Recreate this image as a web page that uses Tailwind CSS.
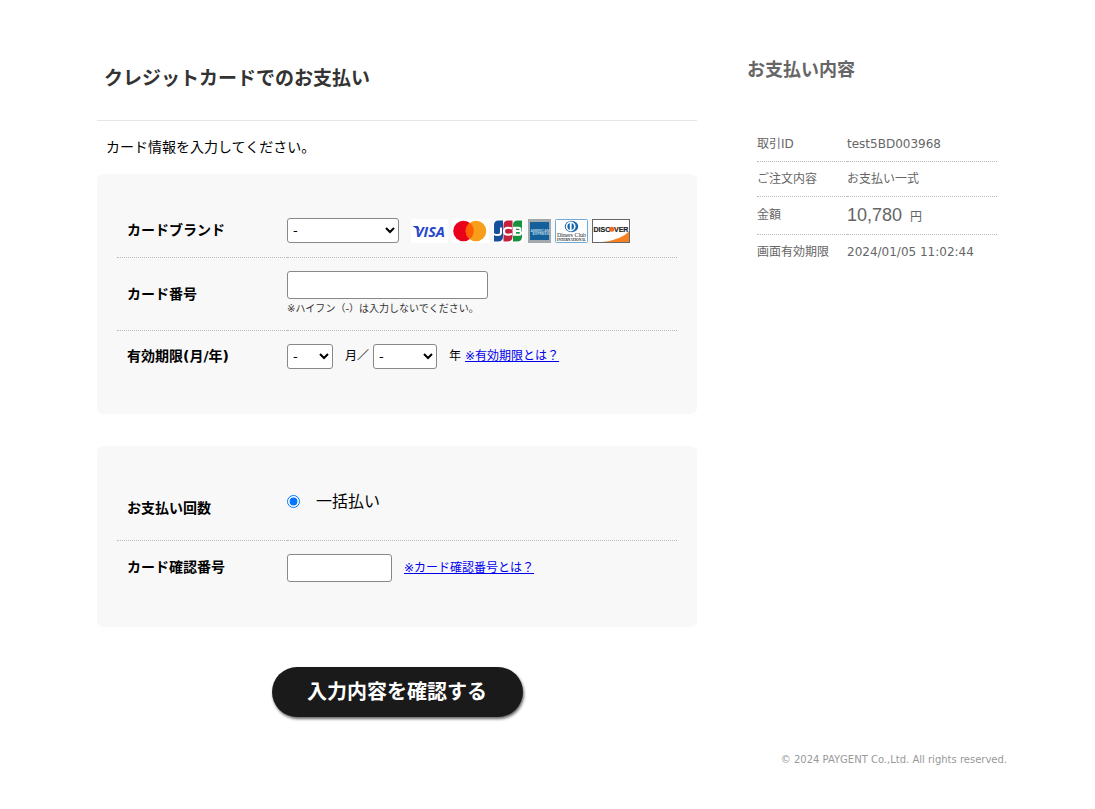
<!DOCTYPE html>
<html lang="ja">
<head>
<meta charset="utf-8">
<meta name="viewport" content="width=device-width, initial-scale=1">
<title>クレジットカードでのお支払い</title>
<script src="https://cdn.jsdelivr.net/npm/@tailwindcss/browser@4"></script>
</head>
<body class="bg-white text-black text-sm font-['DejaVu_Sans','Noto_Sans_CJK_JP',sans-serif]">
<div class="max-w-[921px] mx-auto pt-14">
  <div class="flex items-start justify-between pl-[10px] pr-[11px]">
    <main class="w-full max-w-[600px]">
      <h1 class="h-[65px] pt-2 pl-[7px] text-[19px] leading-7 font-bold text-[#333] border-b border-[#e5e5e5]">クレジットカードでのお支払い</h1>
      <p class="pt-3 pl-[9px] pb-[13px] leading-7">カード情報を入力してください。</p>
      <form>
        <section class="bg-[#f8f8f8] rounded-md px-5 pt-[30px] pb-[33px]">
          <table class="w-full border-collapse text-left">
            <tr class="h-[53px] border-b border-dotted border-[#bbb]">
              <th class="w-[170px] pl-[10px] font-bold"><label for="brand">カードブランド</label></th>
              <td class="pt-px">
                <div class="flex items-center">
                  <select id="brand" class="w-28 h-[25px] mr-3 pl-px text-[13px] bg-white border border-[#888] rounded-[3px]"><option>-</option></select>
                  <div class="flex items-center gap-1">
                    <svg class="w-[37px] h-6" viewBox="0 0 37 24" role="img" aria-label="VISA"><rect width="37" height="24" fill="#fff"/><text x="4" y="17.500" font-family="Open Sans" font-weight="700" font-style="italic" font-size="14.500" fill="#2747c7">VISA</text><path d="M1.500 7h5.500l2 5z" fill="#2747c7"/></svg>
                    <svg class="w-[37px] h-6" viewBox="0 0 37 24" role="img" aria-label="Mastercard"><rect width="37" height="24" fill="#fff"/><circle cx="11.500" cy="12" r="10.300" fill="#eb001b"/><circle cx="24" cy="12" r="10.300" fill="#f79e1b"/><path d="M17.750 3.800a10.300 10.300 0 0 1 0 16.400a10.300 10.300 0 0 1 0-16.400" fill="#ff5f00"/></svg>
                    <svg class="w-[31px] h-6" viewBox="0 0 31 24" role="img" aria-label="JCB"><rect width="31" height="24" fill="#fff"/><path d="M5.500 1.500H10v16q0 5-5 5H1V6q0-4.500 4.500-4.500" fill="#15509c"/><path d="M15 1.500h4.500v16q0 5-5 5h-4V6q0-4.500 4.500-4.500" fill="#c5203e"/><path d="M24.500 1.500H29v16q0 5-5 5h-4V6q0-4.500 4.500-4.500" fill="#16933f"/><g fill="none" stroke="#fff" stroke-width="2"><path d="M8 8.500v5q0 2.500-3.500 2.500-2 0-3.500-1"/><path d="M19 9.500q-2-.8-4-.8-4 0-4 3.500t4 3.500q2 0 4-.8"/><path d="M21 8.800h4.500q2 0 2 1.600t-2 1.700h-4.500h5q2 0 2 1.800t-2 1.800h-5zM22 8.500v7"/></g></svg>
                    <svg class="w-[23px] h-6" viewBox="0 0 23 24" role="img" aria-label="American Express"><rect width="23" height="24" fill="#a4a9ad"/><rect x="2" y="3" width="19" height="18" fill="#13609b"/><g font-family="Liberation Sans" font-weight="700" font-size="3.500" fill="#b9d5e6"><text x="2.500" y="12.500">AMERICAN</text><text x="4.500" y="16">EXPRESS</text></g></svg>
                    <svg class="w-[33px] h-6" viewBox="0 0 33 24" role="img" aria-label="Diners Club International"><rect x=".5" y=".5" width="32" height="23" rx="1" fill="#fff" stroke="#72aad6"/><ellipse cx="16.500" cy="7.500" rx="6.700" ry="5.800" fill="#1767ae"/><circle cx="15.700" cy="7.500" r="4.900" fill="#fff"/><path d="M14.800 4a3.700 3.700 0 0 0 0 7zM16.600 4a3.700 3.700 0 0 1 0 7z" fill="#1767ae"/><g font-family="Liberation Serif" fill="#222" text-anchor="middle"><text x="16.500" y="18.200" font-size="6">Diners Club</text><text x="16.500" y="21.800" font-size="3.400" font-weight="700">INTERNATIONAL</text></g></svg>
                    <svg class="w-[38px] h-6" viewBox="0 0 38 24" role="img" aria-label="DISCOVER"><rect x=".5" y=".5" width="37" height="23" fill="#fff" stroke="#666"/><path d="M37 12.500V23H10Q29 21 37 12.500" fill="#f58220"/><g font-family="Liberation Sans" font-weight="700" font-size="7" fill="#222" stroke="#222" stroke-width=".2"><text x="1.500" y="12.800">DISC</text><text x="22" y="12.800">VER</text></g><circle cx="19.800" cy="10.300" r="2.500" fill="#f26a21"/></svg>
                  </div>
                </div>
              </td>
            </tr>
            <tr class="h-[73px] border-b border-dotted border-[#bbb]">
              <th class="pl-[10px] font-bold"><label for="number">カード番号</label></th>
              <td><input id="number" type="text" class="block mt-px w-[201px] h-7 px-2 bg-white border border-[#888] rounded-[3px]"><p class="mt-[2px] text-[10px] leading-4 text-[#333]">※ハイフン（-）は入力しないでください。</p></td>
            </tr>
            <tr class="h-[51px]">
              <th class="pl-[10px] font-bold">有効期限(月/年)</th>
              <td class="pt-px"><div class="flex items-center text-xs">
                <select id="month" aria-label="月" class="w-[46px] h-[25px] pl-px text-[13px] bg-white border border-[#888] rounded-[3px]"><option>-</option></select>
                <label for="month" class="ml-3 mr-1">月／</label>
                <select id="year" aria-label="年" class="w-16 h-[25px] pl-px text-[13px] bg-white border border-[#888] rounded-[3px]"><option>-</option></select>
                <label for="year" class="ml-3 mr-1">年</label>
                <a href="#" class="text-[#00e] underline">※有効期限とは？</a></div></td>
            </tr>
          </table>
        </section>
        <section class="mt-8 bg-[#f8f8f8] rounded-md px-5 pt-[30px] pb-[33px]">
          <table class="w-full border-collapse text-left">
            <tr class="h-16 border-b border-dotted border-[#bbb]">
              <th class="w-[170px] pl-[10px] font-bold">お支払い回数</th>
              <td class="pb-3"><label class="flex items-center gap-4 text-base"><input type="radio" name="times" checked class="w-[13px] h-[13px]">一括払い</label></td>
            </tr>
            <tr class="h-[54px]">
              <th class="pl-[10px] font-bold"><label for="cvc">カード確認番号</label></th>
              <td class="pt-px"><div class="flex items-center gap-3 text-xs"><input id="cvc" type="text" class="w-[105px] h-7 px-2 bg-white border border-[#888] rounded-[3px]"><a href="#" class="text-[#00e] underline">※カード確認番号とは？</a></div></td>
            </tr>
          </table>
        </section>
        <button type="button" class="block mx-auto mt-10 w-[251px] h-[50px] rounded-full bg-[#1a1a1a] text-white text-xl font-bold shadow-[1px_2px_3px_rgba(0,0,0,0.6)]">入力内容を確認する</button>
      </form>
    </main>
    <aside class="w-[250px] shrink-0 text-xs text-[#666]">
      <h2 class="text-lg leading-7 font-bold">お支払い内容</h2>
      <table class="mt-[42px] ml-[10px] w-[240px] border-collapse text-left">
        <tr class="h-[35px] border-b border-dotted border-[#bbb]"><th class="w-[90px] pt-px font-normal">取引ID</th><td class="pt-px">test5BD003968</td></tr>
        <tr class="h-[35px] border-b border-dotted border-[#bbb]"><th class="font-normal">ご注文内容</th><td>お支払い一式</td></tr>
        <tr class="h-[38px] border-b border-dotted border-[#bbb]"><th class="font-normal">金額</th><td><span class="mr-2 text-lg font-['Liberation_Sans',sans-serif]">10,780</span>円</td></tr>
        <tr class="h-[36px]"><th class="font-normal">画面有効期限</th><td>2024/01/05 11:02:44</td></tr>
      </table>
    </aside>
  </div>
  <footer class="mt-[35px] pr-px pb-8 text-right text-[10px] leading-4 text-[#999]">© 2024 PAYGENT Co.,Ltd. All rights reserved.</footer>
</div>
</body>
</html>
